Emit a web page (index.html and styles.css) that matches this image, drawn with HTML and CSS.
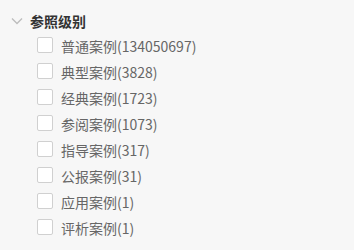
FILE: index.html
```html
<!DOCTYPE html>
<html lang="zh">
<head>
<meta charset="utf-8">
<link rel="stylesheet" href="styles.css">
</head>
<body>
<div class="panel">
  <div class="group-head">
    <svg class="chevron" width="12" height="8" viewBox="0 0 12 8"><path d="M1 1.5 L6 6.5 L11 1.5" fill="none" stroke="#bdbdbd" stroke-width="1.3"/></svg>
    <span class="group-title">参照级别</span>
  </div>
  <ul class="items">
    <li class="item"><span class="box"></span><span class="label">普通案例(134050697)</span></li>
    <li class="item"><span class="box"></span><span class="label">典型案例(3828)</span></li>
    <li class="item"><span class="box"></span><span class="label">经典案例(1723)</span></li>
    <li class="item"><span class="box"></span><span class="label">参阅案例(1073)</span></li>
    <li class="item"><span class="box"></span><span class="label">指导案例(317)</span></li>
    <li class="item"><span class="box"></span><span class="label">公报案例(31)</span></li>
    <li class="item"><span class="box"></span><span class="label">应用案例(1)</span></li>
    <li class="item"><span class="box"></span><span class="label">评析案例(1)</span></li>
  </ul>
</div>
</body>
</html>
```
FILE: styles.css
```css
html, body {
  margin: 0;
  padding: 0;
  background: #f7f7f7;
}
body {
  font-family: "Noto Sans CJK SC", "Noto Sans", sans-serif;
  width: 354px;
  height: 250px;
  overflow: hidden;
}
.panel {
  padding: 8px 0 0 10px;
}
.group-head {
  display: flex;
  align-items: center;
  height: 24px;
  padding-top: 2px;
  box-sizing: border-box;
}
.chevron {
  display: block;
  margin-left: 1px;
  margin-right: 7px;
}
.group-title {
  font-size: 14px;
  font-weight: bold;
  color: #333;
  line-height: 20px;
}
.items {
  list-style: none;
  margin: 0;
  padding: 0 0 0 27px;
}
.item {
  display: flex;
  align-items: center;
  height: 26px;
}
.box {
  width: 14px;
  height: 14px;
  background: #fff;
  border: 1px solid #d0d0d0;
  border-radius: 2px;
  margin-right: 8px;
  flex-shrink: 0;
}
.label {
  font-size: 14px;
  color: #666;
  line-height: 20px;
  padding-top: 1px;
}
```
